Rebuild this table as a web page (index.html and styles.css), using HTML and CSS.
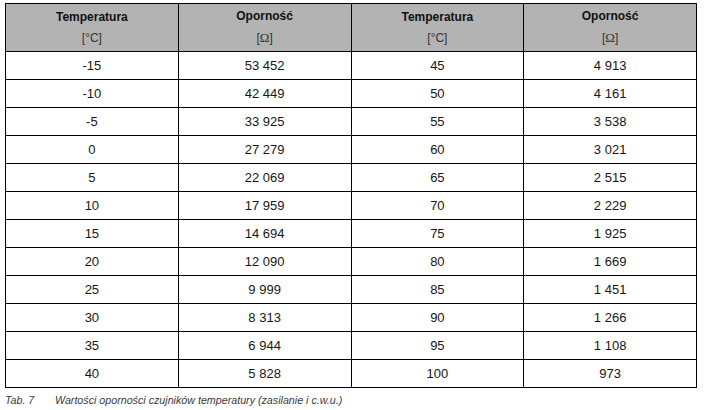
FILE: index.html
```html
<!DOCTYPE html>
<html lang="pl">
<head>
<meta charset="utf-8">
<title>Tab. 7</title>
<link rel="stylesheet" href="styles.css">
</head>
<body>
<div class="page">
<table class="res">
<thead>
<tr>
<th><span class="hd">Temperatura</span><span class="unit">[°C]</span></th>
<th><span class="hd">Oporność</span><span class="unit">[<span class="omega">Ω</span>]</span></th>
<th><span class="hd">Temperatura</span><span class="unit">[°C]</span></th>
<th><span class="hd">Oporność</span><span class="unit">[<span class="omega">Ω</span>]</span></th>
</tr>
</thead>
<tbody>
<tr><td>-15</td><td>53 452</td><td>45</td><td>4 913</td></tr>
<tr><td>-10</td><td>42 449</td><td>50</td><td>4 161</td></tr>
<tr><td>-5</td><td>33 925</td><td>55</td><td>3 538</td></tr>
<tr><td>0</td><td>27 279</td><td>60</td><td>3 021</td></tr>
<tr><td>5</td><td>22 069</td><td>65</td><td>2 515</td></tr>
<tr><td>10</td><td>17 959</td><td>70</td><td>2 229</td></tr>
<tr><td>15</td><td>14 694</td><td>75</td><td>1 925</td></tr>
<tr><td>20</td><td>12 090</td><td>80</td><td>1 669</td></tr>
<tr><td>25</td><td>9 999</td><td>85</td><td>1 451</td></tr>
<tr><td>30</td><td>8 313</td><td>90</td><td>1 266</td></tr>
<tr><td>35</td><td>6 944</td><td>95</td><td>1 108</td></tr>
<tr><td>40</td><td>5 828</td><td>100</td><td>973</td></tr>
</tbody>
</table>
<div class="caption"><span class="tab">Tab. 7</span><span class="ctext">Wartości oporności czujników temperatury (zasilanie i c.w.u.)</span></div>
</div>
</body>
</html>
```

FILE: styles.css
```css
html, body {
  margin: 0;
  padding: 0;
  background: #fff;
}
.page {
  padding: 3px 0 0 5px;
  font-family: "Liberation Sans", Arial, sans-serif;
  color: #161616;
}
.res {
  border-collapse: collapse;
  table-layout: fixed;
  width: 692px;
}
.res th, .res td {
  border: 1px solid #000;
  padding: 0;
  text-align: center;
  vertical-align: middle;
}
.res th {
  background: #b3b3b3;
  height: 47px;
  font-weight: normal;
}
.res td {
  height: 27px;
  font-size: 13px;
}
.hd {
  display: block;
  font-weight: bold;
  font-size: 12px;
  line-height: 21px;
  color: #111;
}
.unit {
  display: block;
  font-size: 12px;
  line-height: 21px;
  color: #333;
}
.omega {
  font-family: "Liberation Serif", "Times New Roman", serif;
  font-size: 13px;
}
.caption {
  margin-top: 6px;
  font-size: 10.7px;
  font-style: italic;
  color: #3a3a3a;
  display: flex;
}
.tab {
  width: 50px;
}
```
